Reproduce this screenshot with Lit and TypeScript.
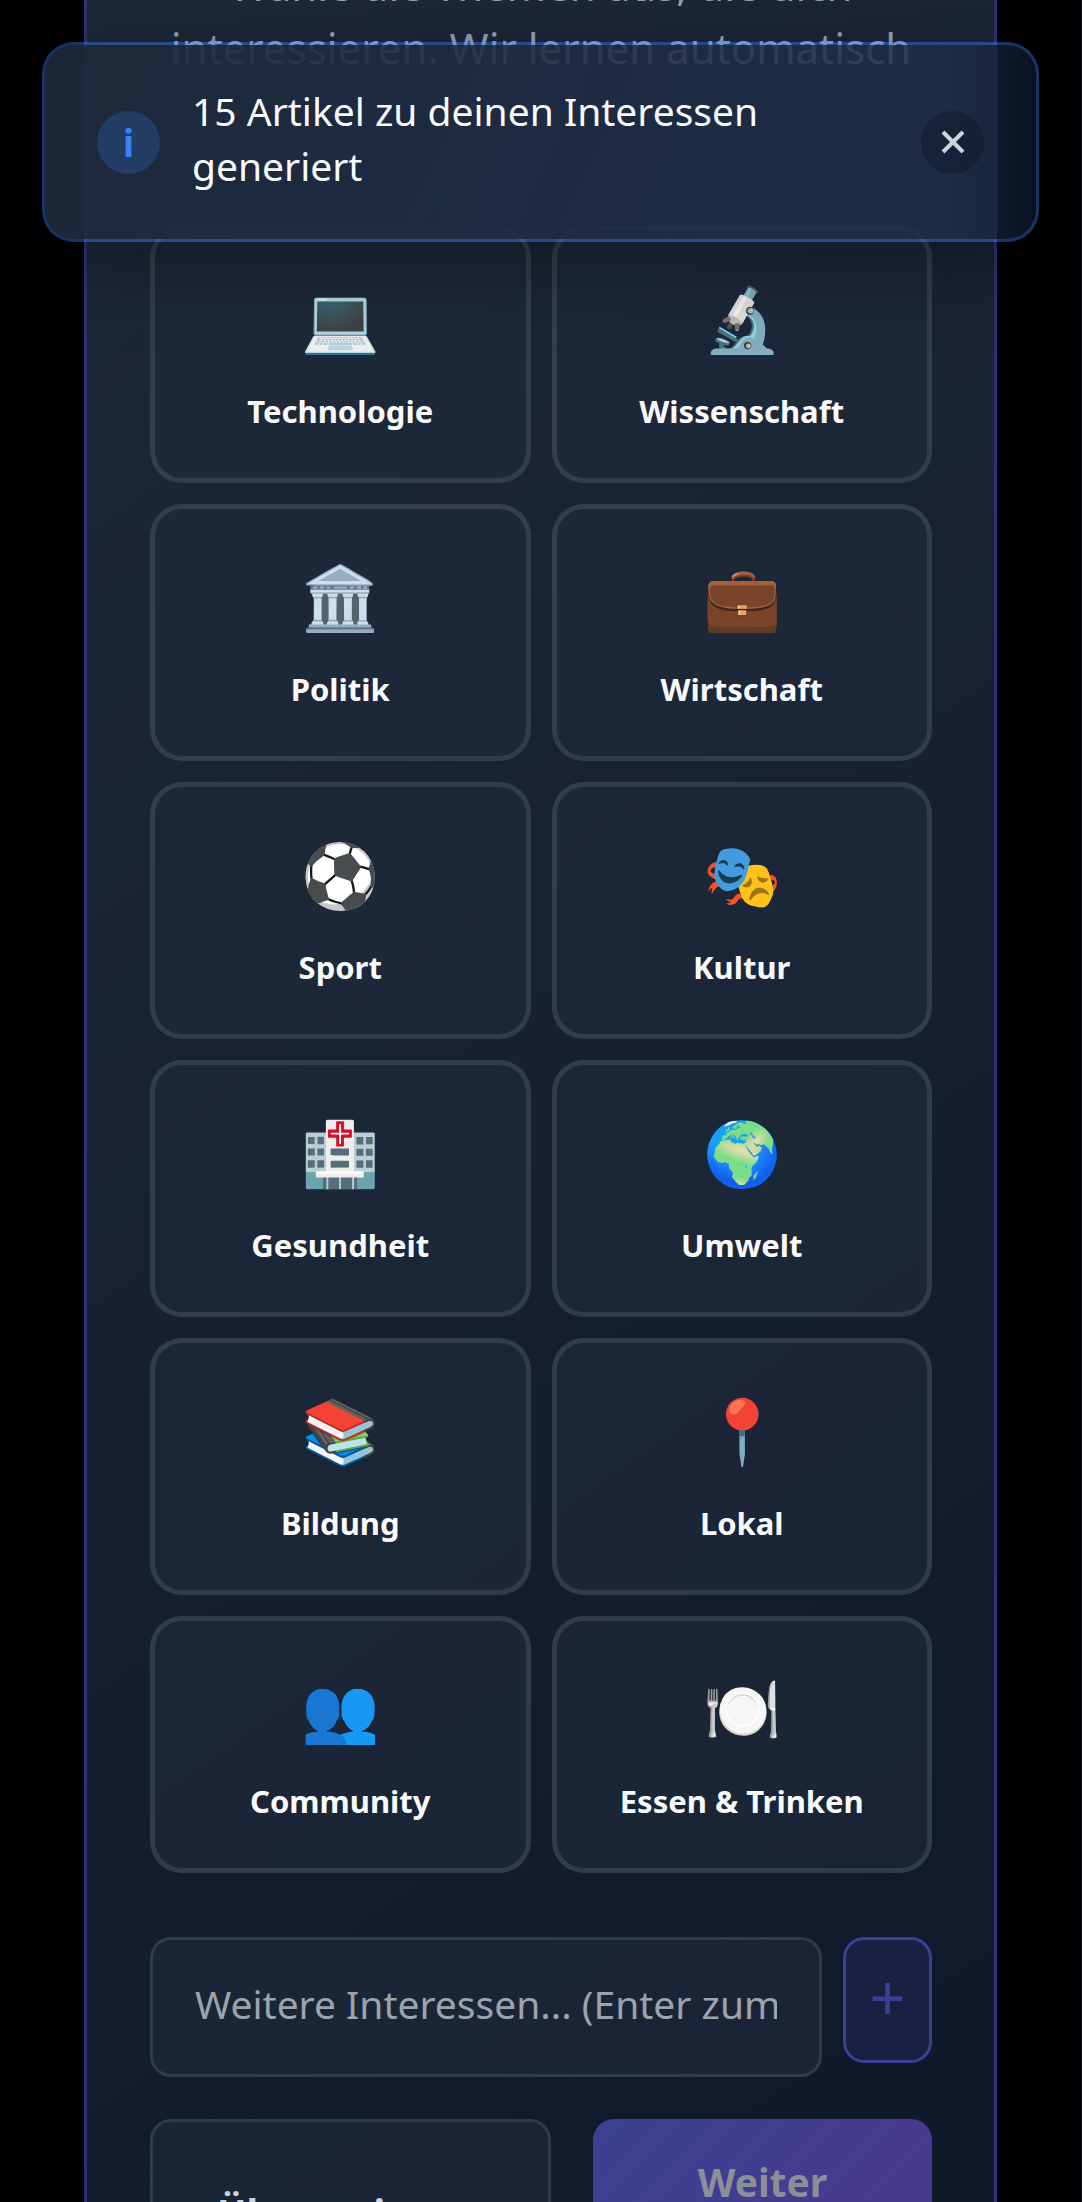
import { LitElement, html, css } from "lit";

const TOPICS: [string, string][] = [
  ["💻", "Technologie"],
  ["🔬", "Wissenschaft"],
  ["🏛️", "Politik"],
  ["💼", "Wirtschaft"],
  ["⚽", "Sport"],
  ["🎭", "Kultur"],
  ["🏥", "Gesundheit"],
  ["🌍", "Umwelt"],
  ["📚", "Bildung"],
  ["📍", "Lokal"],
  ["👥", "Community"],
  ["🍽️", "Essen & Trinken"],
];

class AppRoot extends LitElement {
  static properties = { toastOpen: { state: true } };
  declare toastOpen: boolean;

  static styles = css`
    :host {
      display: block;
      position: relative;
      box-sizing: border-box;
      height: 100vh;
      overflow: hidden;
      border-right: 1px solid #1b1c1f;
      background: #000103;
      color: #f8fafc;
      font-family: "Noto Sans", sans-serif;
      font-size: 39px;
    }
    * {
      box-sizing: border-box;
    }
    button,
    input {
      font: inherit;
      color: inherit;
      margin: 0;
    }
    .panel {
      margin: 0 84px;
      padding: 0 62px 0 63px;
      border: solid #2e3270;
      border-width: 0 3px;
      background: linear-gradient(145deg, #1e293b, #0f172a);
    }
    .intro {
      margin: 0;
      height: 226px;
      overflow: hidden;
      color: #94a3b8;
      text-align: center;
      line-height: 63px;
      font-size: 42px;
    }
    .lines {
      display: block;
      margin-top: -47px;
    }
    .topics {
      display: grid;
      grid-template-columns: 1fr 1fr;
      gap: 21px;
    }
    .topic {
      display: flex;
      flex-direction: column;
      align-items: center;
      gap: 22px;
      padding: 37px 21px 46px;
      border: 5px solid rgba(255, 255, 255, 0.1);
      border-radius: 32px;
      background: rgba(30, 41, 59, 0.7);
    }
    .emoji {
      font-size: 63px;
      line-height: 100px;
    }
    .label {
      font-size: 31px;
      font-weight: 700;
      line-height: 42px;
    }
    .custom {
      display: flex;
      align-items: flex-start;
      gap: 21px;
      margin-top: 64px;
    }
    .field {
      flex: 1;
      min-width: 0;
      height: 140px;
      padding: 0 42px 8px;
      border: 3px solid rgba(255, 255, 255, 0.1);
      border-radius: 21px;
      background: rgba(30, 41, 59, 0.7);
      outline: none;
    }
    .field::placeholder {
      color: #9ca3af;
      opacity: 1;
    }
    .add {
      width: 89px;
      height: 126px;
      padding: 0 0 8px;
      border: 3px solid #3d3f93;
      border-radius: 21px;
      background: #1a2041;
      color: #3d3f93;
      font-size: 63px;
      line-height: 63px;
    }
    .actions {
      display: flex;
      gap: 42px;
      margin-top: 42px;
    }
    .action {
      height: 199px;
      border-radius: 21px;
      font-weight: 700;
      line-height: 60px;
    }
    .skip {
      width: 401px;
      padding: 0 0 12px;
      border: 3px solid rgba(255, 255, 255, 0.1);
      background: rgba(30, 41, 59, 0.7);
      color: #cbd5e1;
    }
    .next {
      flex: 1;
      padding: 0 0 74px;
      border: 0;
      background: linear-gradient(135deg, #3b4192, #4e378e);
      color: #8b8f96;
    }
    .toast {
      position: absolute;
      top: 42px;
      left: 42px;
      right: 42px;
      display: flex;
      align-items: center;
      gap: 32px;
      padding: 38px 52px;
      border: 3px solid rgba(59, 130, 246, 0.4);
      border-radius: 32px;
      background:
        linear-gradient(to left, #081120 0, #0f1c2c 39px, rgba(15, 23, 42, 0.3) 39px, transparent 90px),
        linear-gradient(115deg, rgba(30, 41, 59, 0.95), rgba(30, 47, 76, 0.82));
      background-clip: padding-box;
      box-shadow: 0 21px 84px rgba(0, 0, 0, 0.35);
    }
    .info,
    .close {
      flex: none;
      display: grid;
      place-items: center;
      width: 63px;
      height: 63px;
      padding: 0;
      border: 0;
      border-radius: 50%;
    }
    .info {
      background: rgba(59, 130, 246, 0.22);
      color: #3b82f6;
      font-weight: 700;
      font-size: 37px;
    }
    .close {
      background: rgba(15, 23, 42, 0.5);
      color: #cbd5e1;
    }
    .cross {
      width: 24px;
      height: 24px;
    }
    .message {
      flex: 1;
      margin: 0;
      padding-bottom: 8px;
      line-height: 55px;
    }
  `;

  constructor() {
    super();
    this.toastOpen = true;
  }

  render() {
    return html`
      <main class="panel">
        <p class="intro">
          <span class="lines">Wähle die Themen aus, die dich<br />interessieren. Wir lernen automatisch</span>
        </p>
        <div class="topics">
          ${TOPICS.map(
            ([emoji, label]) => html`<button class="topic" type="button">
              <span class="emoji" aria-hidden="true">${emoji}</span>
              <span class="label">${label}</span>
            </button>`
          )}
        </div>
        <div class="custom">
          <input class="field" type="text" aria-label="Weitere Interessen" placeholder="Weitere Interessen... (Enter zum Hinzufügen)" />
          <button class="add" type="button" disabled>+</button>
        </div>
        <div class="actions">
          <button class="action skip" type="button">Überspringen</button>
          <button class="action next" type="button" disabled>Weiter</button>
        </div>
      </main>
      ${this.toastOpen
        ? html`<div class="toast" role="status">
            <span class="info" aria-hidden="true">i</span>
            <p class="message">15 Artikel zu deinen Interessen generiert</p>
            <button class="close" type="button" aria-label="Schließen" @click=${() => (this.toastOpen = false)}>
              <svg class="cross" viewBox="0 0 24 24" fill="none" stroke="currentColor" stroke-width="4">
                <path d="M2 2 22 22M22 2 2 22" />
              </svg>
            </button>
          </div>`
        : null}
    `;
  }
}
customElements.define("app-root", AppRoot);
